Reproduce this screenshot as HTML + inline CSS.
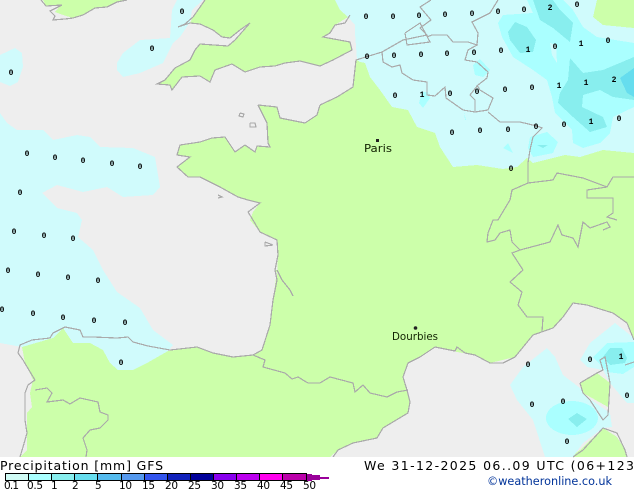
<!DOCTYPE html>
<html><head><meta charset="utf-8"><title>Precipitation GFS</title>
<style>
html,body{margin:0;padding:0;background:#fff;width:634px;height:490px;overflow:hidden}
svg{display:block}
text{font-family:"DejaVu Sans","Liberation Sans",sans-serif;fill:#000}
.m text{font-family:"Liberation Mono",monospace;font-size:8px;font-weight:bold;text-anchor:middle}
.c{fill:none;stroke:#aaa;stroke-width:1.200}
</style></head><body>
<svg width="634" height="490" viewBox="0 0 634 490" xmlns="http://www.w3.org/2000/svg">
<rect width="634" height="490" fill="#fff"/>
<rect width="634" height="457" fill="#eeeeee"/>
<g shape-rendering="crispEdges">
<!-- land -->
<g fill="#ccffaa">
<polygon points="43,0 46,6 60,6 55,12 63,15 73,18 83,15 95,8 107,7 117,2 127,0"/>
<polygon points="205,0 193,17 190,23 200,24 213,30 222,37 230,38 240,30 250,23 235,40 228,46 200,44 195,50 190,60 175,68 165,80 157,84 170,85 172,90 182,77 200,76 210,82 215,70 232,64 245,72 260,67 275,66 285,63 300,61 320,66 333,60 352,50 350,42 323,37 330,33 335,25 348,17 340,10 335,0"/>
<polygon points="597,0 593,17 603,25 634,28 634,0"/>
<polygon points="0,457 20,457 27,450 27,413 32,407 30,393 33,380 25,363 22,347 53,338 63,328 100,340 168,351 197,347 213,353 233,357 253,355 262,350 270,325 273,300 277,270 275,270 277,280 278,255 277,240 260,232 250,220 253,212 260,203 248,200 238,197 220,187 200,177 188,177 177,167 190,157 177,155 180,145 200,142 212,138 225,137 235,152 245,145 255,152 257,146 270,147 268,143 267,123 258,105 277,107 280,118 305,123 317,115 320,105 337,97 353,87 356,60 360,57 634,100 634,340 627,323 613,313 587,305 573,303 563,317 553,328 533,335 515,357 490,363 475,355 457,352 435,347 420,357 408,363 403,377 407,390 410,402 408,413 383,428 377,438 353,443 338,450 330,457"/>
<polygon points="580,383 597,373 610,383 608,407 583,393"/>
<polygon points="580,450 603,428 617,437 625,450 627,457 570,457"/>
</g>
<!-- light precip -->
<g fill="#d0fbfc">
<polygon points="0,113 7,123 17,130 43,130 53,140 77,135 90,137 100,147 133,148 155,157 160,187 153,195 123,197 107,187 83,192 57,185 42,193 57,208 77,213 82,220 78,237 93,250 103,270 117,292 140,308 153,330 173,345 168,351 147,363 133,370 118,370 110,363 103,350 90,343 73,343 63,328 53,338 22,347 0,343"/>
<polygon points="117,63 123,53 140,40 170,38 172,10 177,0 203,0 192,10 190,22 180,37 173,43 163,63 140,73 123,77 117,70"/>
<polygon points="0,55 15,48 22,53 23,67 18,82 10,86 0,82"/>
<polygon points="335,0 340,10 348,17 355,25 355,33 357,60 360,62 365,63 370,77 380,90 392,107 408,110 417,127 435,133 440,147 453,167 477,165 503,169 517,167 527,158 533,163 565,155 580,157 603,150 634,153 634,28 603,25 593,17 597,0"/>
<polygon points="510,385 523,367 547,348 555,357 563,375 580,388 587,397 610,413 612,427 603,428 583,443 573,457 545,457 533,420 517,400"/>
<polygon points="580,360 590,343 615,323 634,338 634,403 627,403 610,383 603,370 587,367"/>
</g>
<g fill="#aaffff">
<polygon points="527,0 533,13 503,15 498,23 502,37 513,57 533,70 547,80 552,97 555,113 572,130 573,143 583,148 600,143 610,133 613,117 634,107 634,43 597,37 583,27 573,10 563,0"/>
<polygon points="473,65 480,59 490,70 483,77 475,75"/>
<polygon points="422,92 428,92 430,98 423,108 419,103"/>
<polygon points="464,112 466,120 465,120"/>
<polygon points="503,148 508,143 513,153"/>
<polygon points="530,137 547,132 558,142 553,153 533,157 528,148"/>
<polygon points="593,357 607,343 634,342 634,367 623,374 607,372"/>
<ellipse cx="572" cy="418" rx="26" ry="17"/>
</g>
<polygon fill="#d0fbfc" points="550,43 556,45 557,63 552,55"/>
<g fill="#88eeee">
<polygon points="533,0 540,20 553,28 570,42 573,23 560,10 553,0"/>
<polygon points="508,32 515,22 527,27 536,40 533,52 520,53 510,40"/>
<polygon points="570,58 583,73 603,70 634,57 634,100 613,97 600,90 583,95 582,107 603,117 607,127 590,132 573,117 558,103 560,93 568,80"/>
<polygon points="537,145 548,145 543,148"/>
<polygon points="603,357 610,348 622,348 627,358 625,363 610,365"/>
<polygon points="568,419 577,413 587,419 577,427"/>
</g>
<polygon fill="#66ddee" points="620,78 634,68 634,97 627,93"/>
<!-- coasts and borders -->
<g class="c">
<polyline points="41,0 46,6 62,5 50,11 55,16 53,20 65,19 73,18 83,15 95,8 107,7 117,2 127,0"/>
<polyline points="205,0 193,17 185,24 178,27 190,23 200,24 213,30 222,37 230,38 240,30 250,23 235,40 228,46 200,44 195,50 190,60 175,68 165,80 157,84 170,85 172,90 182,77 200,76 210,82 215,70 232,64 245,72 260,67 275,66 285,63 300,61 320,66 333,60 352,50 350,42 323,37 330,33 335,25 345,23 350,15"/>
<polyline points="320,105 337,97 353,87 356,60 382,52 403,40 427,35 420,28 431,20 420,7 431,0"/>
<polyline points="405,33 420,23 430,42 407,45 405,33"/>
<polyline points="258,105 267,123 268,143 270,147 257,146 255,152 245,145 235,152 225,137 212,138 200,142 180,145 177,155 190,157 177,167 188,177 200,177 220,187 238,197 248,200 260,203 248,212 253,220 260,232 277,240 278,255 275,270 277,280 273,300 270,325 262,350 253,355 233,357 213,353 197,347 170,350 148,346 133,342 128,337 117,338 93,337 83,337 80,330 65,327 53,333 50,338 32,340 20,345 18,353 23,360 35,380 28,385 25,393 25,420 27,433 23,447 20,457"/>
<polyline points="258,105 277,107 280,118 305,123 317,115 320,105"/>
<polyline points="240,113 244,114 243,117 239,116 240,113"/>
<polyline points="250,123 255,123 256,127 250,127 250,123"/>
<polyline points="218,195 222,197 218,198"/>
<polyline points="265,242 273,245 265,246 265,242"/>
<polyline points="277,270 282,280 290,290 293,296"/>
<!-- Belgium / Netherlands / Germany borders -->
<polyline points="382,52 383,62 392,67 400,65 402,73 413,80 427,82 427,95 435,96 445,87 446,98 463,110 475,112 475,100 470,95 478,85 487,78 488,72 477,62 465,60 468,50 477,45 468,42 453,42 447,35 432,35 427,37"/>
<polyline points="475,112 488,110 493,98 480,90 477,85"/>
<polyline points="488,112 500,122 520,122 537,126 542,128 533,137 530,150 528,163 528,183 553,180 557,173 583,178 607,187 613,177 634,177"/>
<polyline points="477,45 478,33 472,22 490,13 498,0"/>
<polyline points="528,183 512,190 510,200 498,220 493,220 488,233 487,242 495,240 500,233 510,230 512,242 520,250 512,253 523,270 510,282 522,292 518,305 527,317 543,317 542,332"/>
<polyline points="520,250 550,242 558,225 562,235 573,238 578,247 583,222 590,228 607,222 610,227 603,230"/>
<polyline points="607,187 587,190 587,198 613,198 613,213 607,217 617,220"/>
<!-- Pyrenees -->
<polyline points="253,355 265,360 263,367 285,373 292,379 298,377 308,383 320,383 330,377 353,383 355,392 363,385 370,393 387,397 397,392 408,390"/>
<!-- Spain / Portugal -->
<polyline points="35,390 47,388 52,393 47,402 63,400 70,404 80,398 98,402 100,412 108,415 108,420 100,428 90,430 83,438 87,450 86,457"/>
<!-- Med coast -->
<polyline points="333,457 338,450 353,443 377,438 383,428 408,413 410,402 407,390 403,377 408,363 420,357 435,347 455,351 457,347 465,353 475,355 490,363 503,363 515,357 533,335 553,328 563,317 573,303 587,305 613,313 627,323 634,340"/>
<polyline points="580,383 597,373 603,370 600,360 605,357 608,372 610,383 608,415 603,420 590,400 583,393 580,383"/>
<polyline points="573,457 583,450 603,428 617,433 625,450 627,457"/>
<polyline points="625,365 634,362"/>
</g>
</g>
<!-- value markers -->
<g class="m">
<text x="182" y="14">0</text><text x="152" y="51">0</text><text x="11" y="75">0</text>
<text x="27" y="156">0</text><text x="55" y="160">0</text><text x="83" y="163">0</text><text x="112" y="166">0</text><text x="140" y="169">0</text><text x="20" y="195">0</text>
<text x="14" y="234">0</text><text x="44" y="238">0</text><text x="73" y="241">0</text><text x="8" y="273">0</text><text x="38" y="277">0</text><text x="68" y="280">0</text><text x="98" y="283">0</text>
<text x="2" y="312">0</text><text x="33" y="316">0</text><text x="63" y="320">0</text><text x="94" y="323">0</text><text x="125" y="325">0</text><text x="121" y="365">0</text>
<text x="366" y="19">0</text><text x="393" y="19">0</text><text x="419" y="18">0</text><text x="445" y="17">0</text><text x="472" y="16">0</text><text x="498" y="14">0</text><text x="524" y="12">0</text><text x="550" y="10">2</text><text x="577" y="7">0</text>
<text x="367" y="59">0</text><text x="394" y="58">0</text><text x="421" y="57">0</text><text x="447" y="56">0</text><text x="474" y="55">0</text><text x="501" y="53">0</text><text x="528" y="52">1</text><text x="555" y="49">0</text><text x="581" y="46">1</text><text x="608" y="43">0</text>
<text x="395" y="98">0</text><text x="422" y="97">1</text><text x="450" y="96">0</text><text x="477" y="94">0</text><text x="505" y="92">0</text><text x="532" y="90">0</text><text x="559" y="88">1</text><text x="586" y="85">1</text><text x="614" y="82">2</text>
<text x="452" y="135">0</text><text x="480" y="133">0</text><text x="508" y="132">0</text><text x="536" y="129">0</text><text x="564" y="127">0</text><text x="591" y="124">1</text><text x="619" y="121">0</text>
<text x="511" y="171">0</text><text x="528" y="367">0</text><text x="590" y="362">0</text><text x="621" y="359">1</text><text x="627" y="398">0</text><text x="532" y="407">0</text><text x="563" y="404">0</text><text x="567" y="444">0</text>
</g>
<!-- cities -->
<rect x="376" y="139" width="3" height="3" fill="#222"/>
<text x="364" y="152" font-size="11" textLength="28" lengthAdjust="spacingAndGlyphs" style="fill:#112200">Paris</text>
<circle cx="415.500" cy="328" r="1.800" fill="#222"/>
<text x="392" y="340" font-size="11" textLength="46" lengthAdjust="spacingAndGlyphs" style="fill:#112200">Dourbies</text>
<!-- footer -->
<text x="0" y="470" font-size="12.500" textLength="163" lengthAdjust="spacing">Precipitation [mm]  GFS</text>
<text x="364" y="470" font-size="12.500" textLength="270" lengthAdjust="spacing">We 31-12-2025 06..09 UTC (06+123</text>
<text x="487" y="485" font-size="11.500" textLength="125" lengthAdjust="spacingAndGlyphs" style="fill:#003399">©weatheronline.co.uk</text>
<!-- legend -->
<g shape-rendering="crispEdges" stroke="#000" stroke-width="1">
<rect x="5.500" y="473.500" width="23" height="7" fill="#d0fbf5"/>
<rect x="28.500" y="473.500" width="23" height="7" fill="#aaffff"/>
<rect x="51.500" y="473.500" width="23" height="7" fill="#88eeee"/>
<rect x="74.500" y="473.500" width="23" height="7" fill="#66ddee"/>
<rect x="97.500" y="473.500" width="24" height="7" fill="#55bbee"/>
<rect x="121.500" y="473.500" width="23" height="7" fill="#5599ee"/>
<rect x="144.500" y="473.500" width="23" height="7" fill="#3355ee"/>
<rect x="167.500" y="473.500" width="23" height="7" fill="#1122bb"/>
<rect x="190.500" y="473.500" width="23" height="7" fill="#000099"/>
<rect x="213.500" y="473.500" width="23" height="7" fill="#8800ee"/>
<rect x="236.500" y="473.500" width="23" height="7" fill="#bb00ee"/>
<rect x="259.500" y="473.500" width="23" height="7" fill="#ff00ee"/>
<rect x="282.500" y="473.500" width="24" height="7" fill="#bb00aa"/>
</g>
<polygon shape-rendering="crispEdges" fill="#990099" points="307,474 312,474 312,475 320,475 320,477 329,477 329,479 320,479 320,480 312,480 312,481 307,481"/>
<g font-size="10.500">
<text x="4" y="489" textLength="15">0.1</text><text x="27" y="489" textLength="16">0.5</text><text x="51" y="489">1</text><text x="72" y="489">2</text><text x="95" y="489">5</text>
<text x="119" y="489" textLength="13">10</text><text x="142" y="489" textLength="13">15</text><text x="165" y="489" textLength="13">20</text><text x="188" y="489" textLength="13">25</text><text x="211" y="489" textLength="13">30</text><text x="234" y="489" textLength="13">35</text><text x="257" y="489" textLength="13">40</text><text x="280" y="489" textLength="13">45</text><text x="303" y="489" textLength="13">50</text>
</g>
</svg>
</body></html>
